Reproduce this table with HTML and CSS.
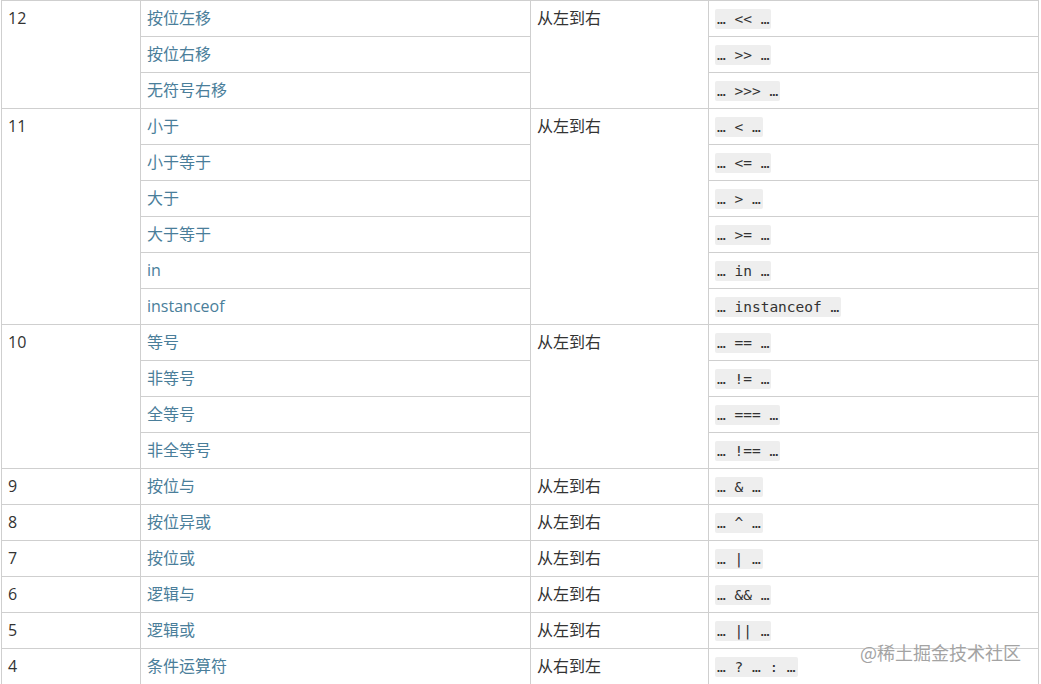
FILE: index.html
```html
<!DOCTYPE html>
<html lang="zh-CN">
<head>
<meta charset="utf-8">
<title>运算符优先级</title>
<link rel="stylesheet" href="styles.css">
</head>
<body>
<div class="page">
<table class="prec">
  <colgroup>
    <col class="c1"><col class="c2"><col class="c3"><col class="c4">
  </colgroup>
  <tbody>
    <tr><td rowspan="3">12</td><td class="op">按位左移</td><td rowspan="3">从左到右</td><td><code>… &lt;&lt; …</code></td></tr>
    <tr><td class="op">按位右移</td><td><code>… &gt;&gt; …</code></td></tr>
    <tr><td class="op">无符号右移</td><td><code>… &gt;&gt;&gt; …</code></td></tr>

    <tr><td rowspan="6">11</td><td class="op">小于</td><td rowspan="6">从左到右</td><td><code>… &lt; …</code></td></tr>
    <tr><td class="op">小于等于</td><td><code>… &lt;= …</code></td></tr>
    <tr><td class="op">大于</td><td><code>… &gt; …</code></td></tr>
    <tr><td class="op">大于等于</td><td><code>… &gt;= …</code></td></tr>
    <tr><td class="op">in</td><td><code>… in …</code></td></tr>
    <tr><td class="op">instanceof</td><td><code>… instanceof …</code></td></tr>

    <tr><td rowspan="4">10</td><td class="op">等号</td><td rowspan="4">从左到右</td><td><code>… == …</code></td></tr>
    <tr><td class="op">非等号</td><td><code>… != …</code></td></tr>
    <tr><td class="op">全等号</td><td><code>… === …</code></td></tr>
    <tr><td class="op">非全等号</td><td><code>… !== …</code></td></tr>

    <tr><td>9</td><td class="op">按位与</td><td>从左到右</td><td><code>… &amp; …</code></td></tr>
    <tr><td>8</td><td class="op">按位异或</td><td>从左到右</td><td><code>… ^ …</code></td></tr>
    <tr><td>7</td><td class="op">按位或</td><td>从左到右</td><td><code>… | …</code></td></tr>
    <tr><td>6</td><td class="op">逻辑与</td><td>从左到右</td><td><code>… &amp;&amp; …</code></td></tr>
    <tr><td>5</td><td class="op">逻辑或</td><td>从左到右</td><td><code>… || …</code></td></tr>
    <tr><td>4</td><td class="op">条件运算符</td><td>从右到左</td><td><code>… ? … : …</code></td></tr>
  </tbody>
</table>
<div class="watermark">@稀土掘金技术社区</div>
</div>
</body>
</html>
```
FILE: styles.css
```css
html, body {
  margin: 0;
  padding: 0;
  background: #fff;
}
.page {
  position: relative;
  width: 1041px;
  height: 684px;
  overflow: hidden;
}
.prec {
  margin-left: 1px;
  width: 1038px;
  table-layout: fixed;
  border-collapse: collapse;
  font-family: "Open Sans", "Noto Sans CJK SC", sans-serif;
  font-size: 16px;
  color: #333;
}
.c1 { width: 139px; }
.c2 { width: 390px; }
.c3 { width: 178px; }
.c4 { width: 330px; }
.prec td {
  border: 1px solid #cfcfcf;
  padding: 6px 6px 7px;
  height: 22px;
  line-height: 22px;
  vertical-align: top;
  box-sizing: content-box;
}
.prec td.op {
  color: #4a7e9a;
}
.prec code {
  font-family: "DejaVu Sans Mono", monospace;
  font-size: 14.5px;
  line-height: 1;
  background: #eeeeee;
  padding: 2px 2px;
  border-radius: 2px;
  color: #333;
}
.watermark {
  position: absolute;
  left: 860px;
  top: 640px;
  font-family: "Noto Sans CJK SC", sans-serif;
  font-size: 18px;
  line-height: 24px;
  color: #a3a3a3;
  text-shadow: 0 0 1px #fff;
}
```
